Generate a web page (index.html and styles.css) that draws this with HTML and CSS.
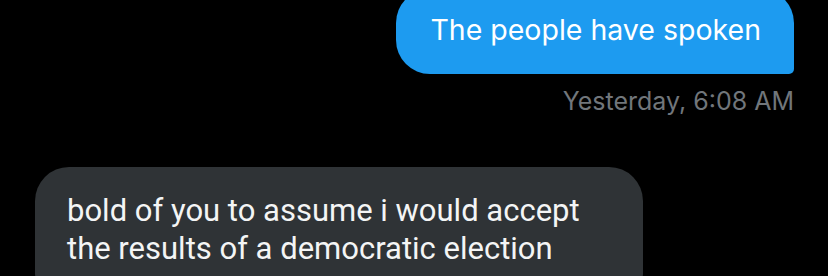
FILE: index.html
```html
<!DOCTYPE html>
<html lang="en">
<head>
    <title>Messages</title>
    <link rel="stylesheet" href="styles.css">
</head>
<body>
    <div class="thread">
        <div class="msg msg-out">
            <div class="bubble bubble-out">The people have spoken</div>
            <div class="timestamp">Yesterday, 6:08 AM</div>
        </div>

        <div class="msg msg-in">
            <div class="bubble bubble-in">bold of you to assume i would accept<br>the results of a democratic election</div>
        </div>
    </div>
</body>
</html>
```

FILE: styles.css
```css
body {
    margin: 0;
    background-color: #000;
    font-family: Inter, Roboto, sans-serif;
    color: #e7e9ea;
    overflow: hidden;
}

.thread {
    display: flex;
    flex-direction: column;
    padding: 0 34px 0 35px;
}

.msg {
    display: flex;
    flex-direction: column;
}

.msg-out {
    align-items: flex-end;
    margin-top: -11px;
}

.msg-in {
    align-items: flex-start;
    margin-top: 51px;
}

.bubble {
    border-radius: 34px;
    white-space: nowrap;
}

.bubble-out {
    background-color: #1d9bf0;
    color: #fff;
    font-size: 28.5px;
    line-height: 36px;
    padding: 23px 33px 26px 34px;
    border-bottom-right-radius: 5px;
}

.timestamp {
    margin-top: 12px;
    font-size: 25px;
    line-height: 30px;
    color: #71767b;
}

.bubble-in {
    font-family: Roboto, sans-serif;
    background-color: #2f3336;
    color: #f4f5f5;
    font-size: 31px;
    line-height: 38px;
    padding: 25px 63px 40px 32px;
}
```
